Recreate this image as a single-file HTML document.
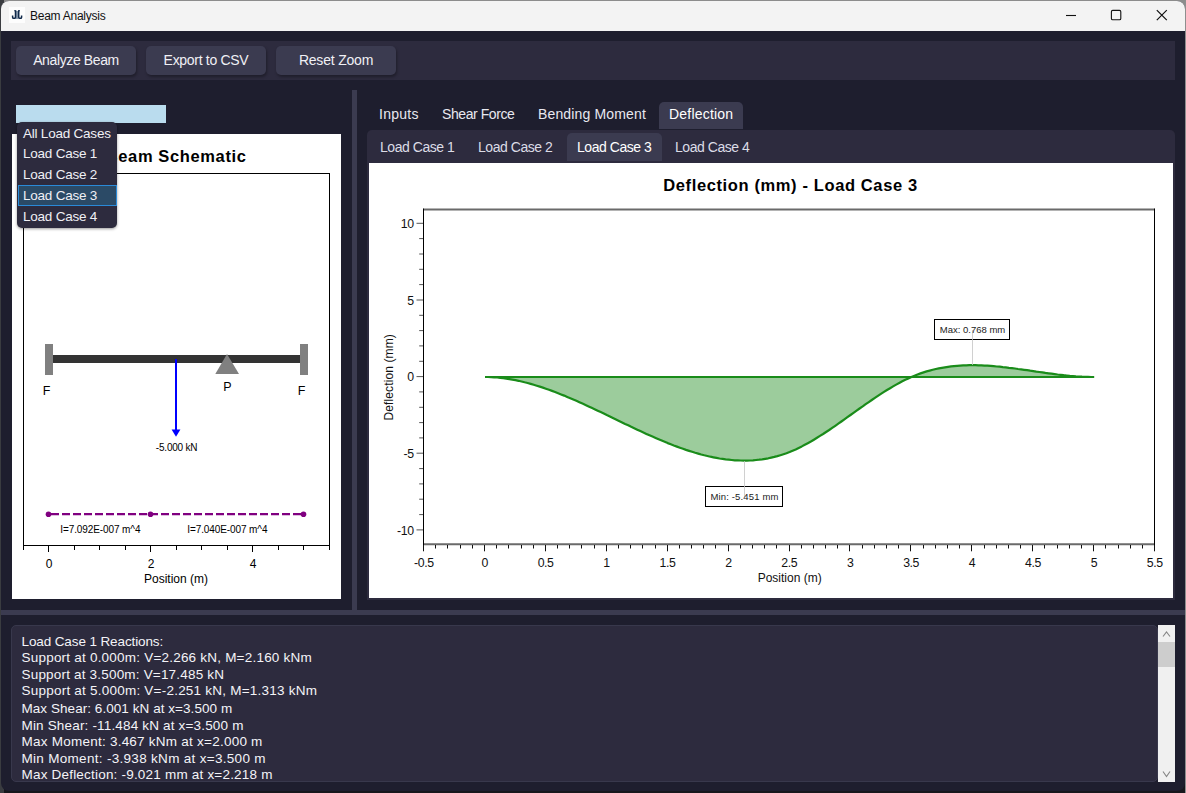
<!DOCTYPE html>
<html lang="en">
<head>
<meta charset="utf-8">
<title>Beam Analysis</title>
<style>
html,body{margin:0;padding:0;}
body{width:1186px;height:793px;overflow:hidden;position:relative;background:#17171c;font-family:"Liberation Sans",sans-serif;color:#e8e8f0;}
.abs{position:absolute;}
#titlebar{left:1px;top:1px;width:1184px;height:30px;background:#f3f3f3;border-radius:8px 8px 0 0;}
#title{left:30px;top:9px;font-size:12px;color:#111;letter-spacing:-0.25px;}
#toolbar{left:11px;top:41px;width:1164px;height:39px;background:#2d2b3e;}
.btn{top:46px;width:120px;height:29px;background:#3b3b50;border-radius:5px;font-size:14px;line-height:29px;text-align:center;color:#f0f0f5;box-shadow:1px 2px 3px rgba(0,0,0,.32);}
#combo{left:16px;top:105px;width:150px;height:18px;background:#badcee;}
#leftpanel{left:12px;top:134px;width:329px;height:465px;background:#fff;}
#vsplit{left:352px;top:90px;width:5px;height:520px;background:#3b3b50;}
#hsplit{left:1px;top:610px;width:1184px;height:5px;background:#3b3b50;}
.tab{top:102px;height:26px;line-height:25px;font-size:14px;color:#e8e8f0;}
#tabsel{left:659px;top:102px;width:84px;height:27px;background:#3b3b50;border-radius:5px 5px 0 0;}
#pane{left:367px;top:130px;width:808px;height:470px;background:#2d2b3e;border-radius:5px 5px 0 0;}
.stab{top:134px;height:27px;line-height:27px;font-size:14px;color:#dcdce6;letter-spacing:-0.45px;}
#stabsel{left:567px;top:133px;width:95px;height:28px;background:#3b3b50;border-radius:5px 5px 0 0;}
#plot{left:369px;top:163px;width:804px;height:435px;background:#fff;}
#out{left:11px;top:625px;width:1145px;height:155px;background:#2d2b3e;overflow:hidden;border:1px solid #38384c;border-radius:5px;}
#out div{position:absolute;left:9.5px;font-size:13.5px;line-height:16px;color:#f4f4f8;white-space:nowrap;}
#sb{left:1158px;top:625px;width:17px;height:157px;background:#f0f0f0;}
#sbthumb{left:1158px;top:642px;width:17px;height:25px;background:#cdcdcd;}
#popup{left:17px;top:122px;width:100px;height:106px;background:#2d2b3e;border-radius:5px;box-shadow:0 1px 3px rgba(0,0,0,.4);}
.item{left:23px;font-size:13.5px;color:#f0f0f5;white-space:nowrap;letter-spacing:-0.22px;}
#itemsel{left:18px;top:185px;width:97px;height:19px;background:#2b4a66;border:1px solid #2a8ad8;}
svg text{font-family:"Liberation Sans",sans-serif;}
</style>
</head>
<body>
<!-- desktop slivers -->
<div class="abs" style="left:0;top:0;width:1186px;height:793px;background:#17171c"></div>
<div class="abs" style="left:0;top:0;width:1186px;height:10px;background:#8c8c8c"></div>
<div class="abs" style="left:0;top:0;width:4px;height:793px;background:#3a3c40"></div>
<div class="abs" style="left:1185px;top:0;width:1px;height:793px;background:#8e8e8e"></div>
<div class="abs" style="left:1px;top:1px;width:1184px;height:790px;background:#1e1e2e;border-radius:8px"></div>
<div id="titlebar" class="abs"></div>
<svg class="abs" style="left:9px;top:7px" width="16" height="16" viewBox="0 0 16 16"><rect width="16" height="16" fill="#fdfdfd"/><rect x="7" y="4" width="2.2" height="8" fill="#8799ad"/><path d="M5.2 3.7 H7.2 M9 3.7 H11" stroke="#10294a" stroke-width="1.1" fill="none"/><path d="M6.5 3.4 V10.2 Q6.5 11.3 5.4 11.3 H4.7 Q3.6 11.3 3.6 10.2 V8.6 M9.7 3.4 V10.2 Q9.7 11.3 10.8 11.3 H11.5 Q12.6 11.3 12.6 10.2 V8.6" stroke="#10294a" stroke-width="1.5" fill="none"/></svg>
<div id="title" class="abs">Beam Analysis</div>
<svg class="abs" style="left:1050px;top:1px" width="136" height="30" viewBox="0 0 136 30">
<path d="M16 14.5 H26" stroke="#111" stroke-width="1.1" fill="none"/>
<rect x="61.4" y="9.4" width="9.4" height="9.4" rx="1.3" stroke="#111" stroke-width="1.1" fill="none"/>
<path d="M106.8 9.2 L116.8 19.2 M116.8 9.2 L106.8 19.2" stroke="#111" stroke-width="1.2" fill="none"/>
</svg>

<div id="toolbar" class="abs"></div>
<div class="abs btn" style="left:16px;letter-spacing:-0.38px">Analyze Beam</div>
<div class="abs btn" style="left:146px;letter-spacing:-0.3px">Export to CSV</div>
<div class="abs btn" style="left:276px;letter-spacing:-0.2px">Reset Zoom</div>

<div id="combo" class="abs"></div>
<div id="leftpanel" class="abs"></div>
<svg class="abs" style="left:0;top:0" width="360" height="610" viewBox="0 0 360 610">
<text x="246.5" y="161.5" text-anchor="end" font-size="16.5" letter-spacing="0.62" font-weight="bold" fill="#000">Beam Schematic</text>
<rect x="23.5" y="173.5" width="306" height="372" fill="none" stroke="#000" stroke-width="1"/>
<g stroke="#000" stroke-width="1">
<line x1="23.5" y1="546" x2="23.5" y2="550"/>
<line x1="48.5" y1="546" x2="48.5" y2="552"/>
<line x1="74.5" y1="546" x2="74.5" y2="550"/>
<line x1="99.5" y1="546" x2="99.5" y2="550"/>
<line x1="125.5" y1="546" x2="125.5" y2="550"/>
<line x1="150.5" y1="546" x2="150.5" y2="552"/>
<line x1="176.5" y1="546" x2="176.5" y2="550"/>
<line x1="201.5" y1="546" x2="201.5" y2="550"/>
<line x1="227.5" y1="546" x2="227.5" y2="550"/>
<line x1="252.5" y1="546" x2="252.5" y2="552"/>
<line x1="278.5" y1="546" x2="278.5" y2="550"/>
<line x1="303.5" y1="546" x2="303.5" y2="550"/>
<line x1="329.5" y1="546" x2="329.5" y2="550"/>
</g>
<g font-size="12" fill="#000" text-anchor="middle">
<text x="49" y="568">0</text><text x="151" y="568">2</text><text x="253" y="568">4</text>
<text x="176" y="583">Position (m)</text>
</g>
<rect x="52" y="355" width="249" height="8" fill="#333"/>
<rect x="45" y="344" width="8" height="31" fill="#808080"/>
<rect x="300" y="344" width="8" height="31" fill="#808080"/>
<polygon points="227,354 239,374 215.3,374" fill="#808080"/>
<g font-size="12.5" fill="#000" text-anchor="middle">
<text x="46.5" y="395">F</text><text x="227.5" y="391">P</text><text x="301.5" y="395">F</text>
</g>
<line x1="176" y1="359" x2="176" y2="430" stroke="#0000ff" stroke-width="2"/>
<polygon points="171.6,429.5 180.4,429.5 176,436.8" fill="#0000ff"/>
<text x="176.6" y="450.7" font-size="10" letter-spacing="-0.2" text-anchor="middle" fill="#000">-5.000 kN</text>
<line x1="51" y1="514.2" x2="301" y2="514.2" stroke="#800080" stroke-width="2.2" stroke-dasharray="8 3"/>
<g fill="#800080"><circle cx="48.5" cy="514.2" r="2.8"/><circle cx="150.5" cy="514.2" r="2.8"/><circle cx="303.5" cy="514.2" r="2.8"/></g>
<g font-size="10" letter-spacing="-0.1" fill="#000" text-anchor="middle">
<text x="100.3" y="532.7">I=7.092E-007 m^4</text><text x="227.3" y="532.7">I=7.040E-007 m^4</text>
</g>
</svg>

<div id="vsplit" class="abs"></div>
<div id="hsplit" class="abs"></div>

<div id="tabsel" class="abs"></div>
<div class="abs tab" style="left:379px;letter-spacing:0.25px">Inputs</div>
<div class="abs tab" style="left:442px;letter-spacing:-0.42px">Shear Force</div>
<div class="abs tab" style="left:538px;letter-spacing:0.15px">Bending Moment</div>
<div class="abs tab" style="left:669px;color:#fff;letter-spacing:0.2px">Deflection</div>

<div id="pane" class="abs"></div>
<div id="stabsel" class="abs"></div>
<div class="abs stab" style="left:380px">Load Case 1</div>
<div class="abs stab" style="left:478px">Load Case 2</div>
<div class="abs stab" style="left:577px;color:#fff">Load Case 3</div>
<div class="abs stab" style="left:675px">Load Case 4</div>

<div id="plot" class="abs"></div>
<svg class="abs" style="left:0;top:0" width="1186" height="610" viewBox="0 0 1186 610">
<text x="790.5" y="190.5" text-anchor="middle" font-size="16.5" letter-spacing="0.62" font-weight="bold" fill="#000">Deflection (mm) - Load Case 3</text>
<path d="M485.0,377.0 L488.0,377.0 L491.1,377.1 L494.1,377.3 L497.2,377.5 L500.2,377.8 L503.3,378.2 L506.3,378.6 L509.4,379.1 L512.4,379.6 L515.5,380.2 L518.5,380.8 L521.5,381.5 L524.6,382.3 L527.6,383.0 L530.7,383.9 L533.7,384.8 L536.8,385.7 L539.8,386.6 L542.9,387.6 L545.9,388.7 L549.0,389.8 L552.0,390.9 L555.1,392.0 L558.1,393.2 L561.1,394.4 L564.2,395.6 L567.2,396.9 L570.3,398.2 L573.3,399.5 L576.4,400.8 L579.4,402.2 L582.5,403.6 L585.5,405.0 L588.6,406.4 L591.6,407.8 L594.6,409.2 L597.7,410.7 L600.7,412.1 L603.8,413.6 L606.8,415.1 L609.9,416.5 L612.9,418.0 L616.0,419.5 L619.0,420.9 L622.1,422.4 L625.1,423.9 L628.2,425.3 L631.2,426.8 L634.2,428.2 L637.3,429.7 L640.3,431.1 L643.4,432.5 L646.4,433.9 L649.5,435.3 L652.5,436.6 L655.6,438.0 L658.6,439.3 L661.7,440.6 L664.7,441.8 L667.7,443.1 L670.8,444.3 L673.8,445.5 L676.9,446.6 L679.9,447.7 L683.0,448.8 L686.0,449.9 L689.1,450.9 L692.1,451.8 L695.2,452.8 L698.2,453.6 L701.2,454.5 L704.3,455.3 L707.3,456.0 L710.4,456.7 L713.4,457.3 L716.5,457.9 L719.5,458.5 L722.6,458.9 L725.6,459.4 L728.7,459.7 L731.7,460.0 L734.8,460.3 L737.8,460.4 L740.8,460.5 L743.9,460.6 L746.9,460.6 L750.0,460.5 L753.0,460.3 L756.1,460.0 L759.1,459.7 L762.2,459.3 L765.2,458.8 L768.3,458.3 L771.3,457.6 L774.3,456.9 L777.4,456.1 L780.4,455.2 L783.5,454.2 L786.5,453.2 L789.6,452.0 L792.6,450.7 L795.7,449.4 L798.7,447.9 L801.8,446.4 L804.8,444.8 L807.8,443.2 L810.9,441.5 L813.9,439.7 L817.0,437.8 L820.0,435.9 L823.1,434.0 L826.1,432.0 L829.2,430.0 L832.2,427.9 L835.3,425.8 L838.3,423.7 L841.4,421.5 L844.4,419.4 L847.4,417.2 L850.5,415.0 L853.5,412.9 L856.6,410.7 L859.6,408.5 L862.7,406.4 L865.7,404.2 L868.8,402.1 L871.8,400.0 L874.9,397.9 L877.9,395.9 L880.9,393.9 L884.0,391.9 L887.0,390.0 L890.1,388.2 L893.1,386.4 L896.2,384.6 L899.2,383.0 L902.3,381.3 L905.3,379.8 L908.4,378.4 L911.4,377.0 L914.5,375.7 L917.5,374.5 L920.5,373.4 L923.6,372.4 L926.6,371.4 L929.7,370.6 L932.7,369.8 L935.8,369.0 L938.8,368.4 L941.9,367.8 L944.9,367.3 L948.0,366.8 L951.0,366.4 L954.0,366.1 L957.1,365.8 L960.1,365.6 L963.2,365.4 L966.2,365.3 L969.3,365.2 L972.3,365.2 L975.4,365.2 L978.4,365.3 L981.5,365.4 L984.5,365.6 L987.5,365.7 L990.6,365.9 L993.6,366.2 L996.7,366.5 L999.7,366.7 L1002.8,367.1 L1005.8,367.4 L1008.9,367.8 L1011.9,368.1 L1015.0,368.5 L1018.0,369.0 L1021.1,369.4 L1024.1,369.8 L1027.1,370.2 L1030.2,370.7 L1033.2,371.1 L1036.3,371.6 L1039.3,372.0 L1042.4,372.4 L1045.4,372.9 L1048.5,373.3 L1051.5,373.7 L1054.6,374.1 L1057.6,374.5 L1060.6,374.8 L1063.7,375.2 L1066.7,375.5 L1069.8,375.8 L1072.8,376.0 L1075.9,376.3 L1078.9,376.5 L1082.0,376.7 L1085.0,376.8 L1088.1,376.9 L1091.1,377.0 L1094.2,377.0 L1094.2,377.0 L485.0,377.0 Z" fill="#9ccc9c" stroke="none"/>
<line x1="485" y1="377" x2="1094" y2="377" stroke="#1a8c1a" stroke-width="2.2"/>
<path d="M485.0,377.0 L488.0,377.0 L491.1,377.1 L494.1,377.3 L497.2,377.5 L500.2,377.8 L503.3,378.2 L506.3,378.6 L509.4,379.1 L512.4,379.6 L515.5,380.2 L518.5,380.8 L521.5,381.5 L524.6,382.3 L527.6,383.0 L530.7,383.9 L533.7,384.8 L536.8,385.7 L539.8,386.6 L542.9,387.6 L545.9,388.7 L549.0,389.8 L552.0,390.9 L555.1,392.0 L558.1,393.2 L561.1,394.4 L564.2,395.6 L567.2,396.9 L570.3,398.2 L573.3,399.5 L576.4,400.8 L579.4,402.2 L582.5,403.6 L585.5,405.0 L588.6,406.4 L591.6,407.8 L594.6,409.2 L597.7,410.7 L600.7,412.1 L603.8,413.6 L606.8,415.1 L609.9,416.5 L612.9,418.0 L616.0,419.5 L619.0,420.9 L622.1,422.4 L625.1,423.9 L628.2,425.3 L631.2,426.8 L634.2,428.2 L637.3,429.7 L640.3,431.1 L643.4,432.5 L646.4,433.9 L649.5,435.3 L652.5,436.6 L655.6,438.0 L658.6,439.3 L661.7,440.6 L664.7,441.8 L667.7,443.1 L670.8,444.3 L673.8,445.5 L676.9,446.6 L679.9,447.7 L683.0,448.8 L686.0,449.9 L689.1,450.9 L692.1,451.8 L695.2,452.8 L698.2,453.6 L701.2,454.5 L704.3,455.3 L707.3,456.0 L710.4,456.7 L713.4,457.3 L716.5,457.9 L719.5,458.5 L722.6,458.9 L725.6,459.4 L728.7,459.7 L731.7,460.0 L734.8,460.3 L737.8,460.4 L740.8,460.5 L743.9,460.6 L746.9,460.6 L750.0,460.5 L753.0,460.3 L756.1,460.0 L759.1,459.7 L762.2,459.3 L765.2,458.8 L768.3,458.3 L771.3,457.6 L774.3,456.9 L777.4,456.1 L780.4,455.2 L783.5,454.2 L786.5,453.2 L789.6,452.0 L792.6,450.7 L795.7,449.4 L798.7,447.9 L801.8,446.4 L804.8,444.8 L807.8,443.2 L810.9,441.5 L813.9,439.7 L817.0,437.8 L820.0,435.9 L823.1,434.0 L826.1,432.0 L829.2,430.0 L832.2,427.9 L835.3,425.8 L838.3,423.7 L841.4,421.5 L844.4,419.4 L847.4,417.2 L850.5,415.0 L853.5,412.9 L856.6,410.7 L859.6,408.5 L862.7,406.4 L865.7,404.2 L868.8,402.1 L871.8,400.0 L874.9,397.9 L877.9,395.9 L880.9,393.9 L884.0,391.9 L887.0,390.0 L890.1,388.2 L893.1,386.4 L896.2,384.6 L899.2,383.0 L902.3,381.3 L905.3,379.8 L908.4,378.4 L911.4,377.0 L914.5,375.7 L917.5,374.5 L920.5,373.4 L923.6,372.4 L926.6,371.4 L929.7,370.6 L932.7,369.8 L935.8,369.0 L938.8,368.4 L941.9,367.8 L944.9,367.3 L948.0,366.8 L951.0,366.4 L954.0,366.1 L957.1,365.8 L960.1,365.6 L963.2,365.4 L966.2,365.3 L969.3,365.2 L972.3,365.2 L975.4,365.2 L978.4,365.3 L981.5,365.4 L984.5,365.6 L987.5,365.7 L990.6,365.9 L993.6,366.2 L996.7,366.5 L999.7,366.7 L1002.8,367.1 L1005.8,367.4 L1008.9,367.8 L1011.9,368.1 L1015.0,368.5 L1018.0,369.0 L1021.1,369.4 L1024.1,369.8 L1027.1,370.2 L1030.2,370.7 L1033.2,371.1 L1036.3,371.6 L1039.3,372.0 L1042.4,372.4 L1045.4,372.9 L1048.5,373.3 L1051.5,373.7 L1054.6,374.1 L1057.6,374.5 L1060.6,374.8 L1063.7,375.2 L1066.7,375.5 L1069.8,375.8 L1072.8,376.0 L1075.9,376.3 L1078.9,376.5 L1082.0,376.7 L1085.0,376.8 L1088.1,376.9 L1091.1,377.0 L1094.2,377.0" fill="none" stroke="#1a8c1a" stroke-width="2.2" stroke-linejoin="round"/>
<line x1="423" y1="209.6" x2="1155" y2="209.6" stroke="#6a6a6a" stroke-width="2"/>
<line x1="423" y1="544.2" x2="1155" y2="544.2" stroke="#6a6a6a" stroke-width="2"/>
<line x1="423.5" y1="208.6" x2="423.5" y2="545.2" stroke="#000" stroke-width="1"/>
<line x1="1154.5" y1="208.6" x2="1154.5" y2="545.2" stroke="#000" stroke-width="1"/>
<g stroke="#111" stroke-width="1">
<line x1="423.5" y1="545" x2="423.5" y2="551.3"/>
<line x1="435.5" y1="545" x2="435.5" y2="548.5"/>
<line x1="447.5" y1="545" x2="447.5" y2="548.5"/>
<line x1="460.5" y1="545" x2="460.5" y2="548.5"/>
<line x1="472.5" y1="545" x2="472.5" y2="548.5"/>
<line x1="484.5" y1="545" x2="484.5" y2="551.3"/>
<line x1="496.5" y1="545" x2="496.5" y2="548.5"/>
<line x1="508.5" y1="545" x2="508.5" y2="548.5"/>
<line x1="521.5" y1="545" x2="521.5" y2="548.5"/>
<line x1="533.5" y1="545" x2="533.5" y2="548.5"/>
<line x1="545.5" y1="545" x2="545.5" y2="551.3"/>
<line x1="557.5" y1="545" x2="557.5" y2="548.5"/>
<line x1="569.5" y1="545" x2="569.5" y2="548.5"/>
<line x1="581.5" y1="545" x2="581.5" y2="548.5"/>
<line x1="594.5" y1="545" x2="594.5" y2="548.5"/>
<line x1="606.5" y1="545" x2="606.5" y2="551.3"/>
<line x1="618.5" y1="545" x2="618.5" y2="548.5"/>
<line x1="630.5" y1="545" x2="630.5" y2="548.5"/>
<line x1="642.5" y1="545" x2="642.5" y2="548.5"/>
<line x1="655.5" y1="545" x2="655.5" y2="548.5"/>
<line x1="667.5" y1="545" x2="667.5" y2="551.3"/>
<line x1="679.5" y1="545" x2="679.5" y2="548.5"/>
<line x1="691.5" y1="545" x2="691.5" y2="548.5"/>
<line x1="703.5" y1="545" x2="703.5" y2="548.5"/>
<line x1="715.5" y1="545" x2="715.5" y2="548.5"/>
<line x1="728.5" y1="545" x2="728.5" y2="551.3"/>
<line x1="740.5" y1="545" x2="740.5" y2="548.5"/>
<line x1="752.5" y1="545" x2="752.5" y2="548.5"/>
<line x1="764.5" y1="545" x2="764.5" y2="548.5"/>
<line x1="776.5" y1="545" x2="776.5" y2="548.5"/>
<line x1="789.5" y1="545" x2="789.5" y2="551.3"/>
<line x1="801.5" y1="545" x2="801.5" y2="548.5"/>
<line x1="813.5" y1="545" x2="813.5" y2="548.5"/>
<line x1="825.5" y1="545" x2="825.5" y2="548.5"/>
<line x1="837.5" y1="545" x2="837.5" y2="548.5"/>
<line x1="849.5" y1="545" x2="849.5" y2="551.3"/>
<line x1="862.5" y1="545" x2="862.5" y2="548.5"/>
<line x1="874.5" y1="545" x2="874.5" y2="548.5"/>
<line x1="886.5" y1="545" x2="886.5" y2="548.5"/>
<line x1="898.5" y1="545" x2="898.5" y2="548.5"/>
<line x1="910.5" y1="545" x2="910.5" y2="551.3"/>
<line x1="923.5" y1="545" x2="923.5" y2="548.5"/>
<line x1="935.5" y1="545" x2="935.5" y2="548.5"/>
<line x1="947.5" y1="545" x2="947.5" y2="548.5"/>
<line x1="959.5" y1="545" x2="959.5" y2="548.5"/>
<line x1="971.5" y1="545" x2="971.5" y2="551.3"/>
<line x1="984.5" y1="545" x2="984.5" y2="548.5"/>
<line x1="996.5" y1="545" x2="996.5" y2="548.5"/>
<line x1="1008.5" y1="545" x2="1008.5" y2="548.5"/>
<line x1="1020.5" y1="545" x2="1020.5" y2="548.5"/>
<line x1="1032.5" y1="545" x2="1032.5" y2="551.3"/>
<line x1="1044.5" y1="545" x2="1044.5" y2="548.5"/>
<line x1="1057.5" y1="545" x2="1057.5" y2="548.5"/>
<line x1="1069.5" y1="545" x2="1069.5" y2="548.5"/>
<line x1="1081.5" y1="545" x2="1081.5" y2="548.5"/>
<line x1="1093.5" y1="545" x2="1093.5" y2="551.3"/>
<line x1="1105.5" y1="545" x2="1105.5" y2="548.5"/>
<line x1="1118.5" y1="545" x2="1118.5" y2="548.5"/>
<line x1="1130.5" y1="545" x2="1130.5" y2="548.5"/>
<line x1="1142.5" y1="545" x2="1142.5" y2="548.5"/>
<line x1="1154.5" y1="545" x2="1154.5" y2="551.3"/>
<line x1="416.5" y1="529.9" x2="423" y2="529.9" stroke="#555"/>
<line x1="419.2" y1="514.6" x2="423" y2="514.6" stroke="#555"/>
<line x1="419.2" y1="499.2" x2="423" y2="499.2" stroke="#555"/>
<line x1="419.2" y1="483.9" x2="423" y2="483.9" stroke="#555"/>
<line x1="419.2" y1="468.6" x2="423" y2="468.6" stroke="#555"/>
<line x1="416.5" y1="453.2" x2="423" y2="453.2" stroke="#555"/>
<line x1="419.2" y1="437.9" x2="423" y2="437.9" stroke="#555"/>
<line x1="419.2" y1="422.6" x2="423" y2="422.6" stroke="#555"/>
<line x1="419.2" y1="407.3" x2="423" y2="407.3" stroke="#555"/>
<line x1="419.2" y1="391.9" x2="423" y2="391.9" stroke="#555"/>
<line x1="416.5" y1="376.6" x2="423" y2="376.6" stroke="#555"/>
<line x1="419.2" y1="361.3" x2="423" y2="361.3" stroke="#555"/>
<line x1="419.2" y1="345.9" x2="423" y2="345.9" stroke="#555"/>
<line x1="419.2" y1="330.6" x2="423" y2="330.6" stroke="#555"/>
<line x1="419.2" y1="315.3" x2="423" y2="315.3" stroke="#555"/>
<line x1="416.5" y1="300.0" x2="423" y2="300.0" stroke="#555"/>
<line x1="419.2" y1="284.6" x2="423" y2="284.6" stroke="#555"/>
<line x1="419.2" y1="269.3" x2="423" y2="269.3" stroke="#555"/>
<line x1="419.2" y1="254.0" x2="423" y2="254.0" stroke="#555"/>
<line x1="419.2" y1="238.6" x2="423" y2="238.6" stroke="#555"/>
<line x1="416.5" y1="223.3" x2="423" y2="223.3" stroke="#555"/>
</g>
<g font-size="12.3" letter-spacing="-0.4" fill="#111">
<text x="423.8" y="567" text-anchor="middle">-0.5</text>
<text x="484.7" y="567" text-anchor="middle">0</text>
<text x="545.6" y="567" text-anchor="middle">0.5</text>
<text x="606.5" y="567" text-anchor="middle">1</text>
<text x="667.4" y="567" text-anchor="middle">1.5</text>
<text x="728.4" y="567" text-anchor="middle">2</text>
<text x="789.3" y="567" text-anchor="middle">2.5</text>
<text x="850.2" y="567" text-anchor="middle">3</text>
<text x="911.1" y="567" text-anchor="middle">3.5</text>
<text x="972.0" y="567" text-anchor="middle">4</text>
<text x="1032.9" y="567" text-anchor="middle">4.5</text>
<text x="1093.9" y="567" text-anchor="middle">5</text>
<text x="1154.8" y="567" text-anchor="middle">5.5</text>
<text x="413.6" y="534.6" text-anchor="end">-10</text>
<text x="413.6" y="457.9" text-anchor="end">-5</text>
<text x="413.6" y="381.3" text-anchor="end">0</text>
<text x="413.6" y="304.7" text-anchor="end">5</text>
<text x="413.6" y="228.0" text-anchor="end">10</text>
<text x="789.7" y="582" font-size="12" letter-spacing="0" text-anchor="middle">Position (m)</text>
<text transform="translate(393,377.3) rotate(-90)" font-size="12" letter-spacing="0.12" text-anchor="middle">Deflection (mm)</text>
</g>
<rect x="934.5" y="319.5" width="75" height="20" fill="#fff" stroke="#000" stroke-width="1"/>
<line x1="972.5" y1="330" x2="972.5" y2="365" stroke="#c4c4c4" stroke-width="0.8"/>
<text x="972.5" y="333" font-size="9.5" text-anchor="middle" fill="#222">Max: 0.768 mm</text>
<rect x="705.5" y="486.5" width="77" height="20" fill="#fff" stroke="#000" stroke-width="1"/>
<line x1="744.5" y1="461" x2="744.5" y2="497" stroke="#c4c4c4" stroke-width="0.8"/>
<text x="744.5" y="500" font-size="9.5" letter-spacing="0.15" text-anchor="middle" fill="#222">Min: -5.451 mm</text>
</svg>

<div id="out" class="abs">
<div style="top:7.5px;letter-spacing:-0.112px">Load Case 1 Reactions:</div>
<div style="top:24.0px;letter-spacing:0.215px">Support at 0.000m: V=2.266 kN, M=2.160 kNm</div>
<div style="top:40.7px;letter-spacing:0.188px">Support at 3.500m: V=17.485 kN</div>
<div style="top:57.4px;letter-spacing:0.226px">Support at 5.000m: V=-2.251 kN, M=1.313 kNm</div>
<div style="top:74.6px;letter-spacing:0.054px">Max Shear: 6.001 kN at x=3.500 m</div>
<div style="top:91.6px;letter-spacing:0.171px">Min Shear: -11.484 kN at x=3.500 m</div>
<div style="top:107.9px;letter-spacing:0.239px">Max Moment: 3.467 kNm at x=2.000 m</div>
<div style="top:124.7px;letter-spacing:0.302px">Min Moment: -3.938 kNm at x=3.500 m</div>
<div style="top:141.4px;letter-spacing:0.201px">Max Deflection: -9.021 mm at x=2.218 m</div>
</div>
<div id="sb" class="abs"></div>
<div id="sbthumb" class="abs"></div>
<svg class="abs" style="left:1158px;top:625px" width="17" height="157" viewBox="0 0 17 157">
<path d="M5 11.5 L8.5 7 L12 11.5" stroke="#858585" stroke-width="1.1" fill="none"/>
<path d="M5 146.5 L8.5 151.5 L12 146.5" stroke="#858585" stroke-width="1.1" fill="none"/>
</svg>

<div id="popup" class="abs"></div>
<div id="itemsel" class="abs"></div>
<div class="abs item" style="top:126px">All Load Cases</div>
<div class="abs item" style="top:146px">Load Case 1</div>
<div class="abs item" style="top:167px">Load Case 2</div>
<div class="abs item" style="top:188px">Load Case 3</div>
<div class="abs item" style="top:209px">Load Case 4</div>
</body>
</html>
